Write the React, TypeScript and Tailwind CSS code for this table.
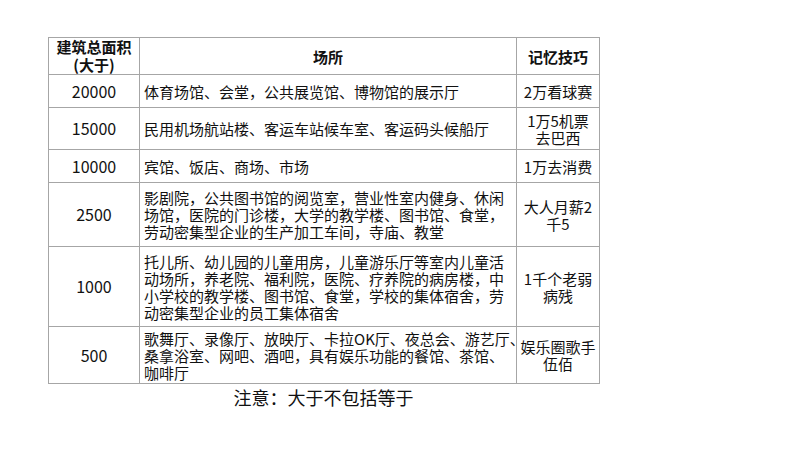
const FONT = { fontFamily: '"Noto Sans CJK SC", "Noto Sans", sans-serif' };

interface Row {
  area: string;
  places: string[];
  tip: string[];
  h: string;
}

const ROWS: Row[] = [
  { area: "20000", places: ["体育场馆、会堂，公共展览馆、博物馆的展示厅"], tip: ["2万看球赛"], h: "h-[33px]" },
  { area: "15000", places: ["民用机场航站楼、客运车站候车室、客运码头候船厅"], tip: ["1万5机票", "去巴西"], h: "h-[42px]" },
  { area: "10000", places: ["宾馆、饭店、商场、市场"], tip: ["1万去消费"], h: "h-[33px]" },
  {
    area: "2500",
    places: [
      "影剧院，公共图书馆的阅览室，营业性室内健身、休闲",
      "场馆，医院的门诊楼，大学的教学楼、图书馆、食堂，",
      "劳动密集型企业的生产加工车间，寺庙、教堂",
    ],
    tip: ["大人月薪2", "千5"],
    h: "h-[64px]",
  },
  {
    area: "1000",
    places: [
      "托儿所、幼儿园的儿童用房，儿童游乐厅等室内儿童活",
      "动场所，养老院、福利院，医院、疗养院的病房楼，中",
      "小学校的教学楼、图书馆、食堂，学校的集体宿舍，劳",
      "动密集型企业的员工集体宿舍",
    ],
    tip: ["1千个老弱", "病残"],
    h: "h-[80px]",
  },
  {
    area: "500",
    places: [
      "歌舞厅、录像厅、放映厅、卡拉OK厅、夜总会、游艺厅、",
      "桑拿浴室、网吧、酒吧，具有娱乐功能的餐馆、茶馆、",
      "咖啡厅",
    ],
    tip: ["娱乐圈歌手", "伍佰"],
    h: "h-[57px]",
  },
];

export default function App() {
  return (
    <div className="h-[450px] w-[800px] bg-white text-[#111]" style={FONT}>
      <div className="pl-[48px] pt-[37px]">
        <table className="w-[551px] table-fixed border-collapse text-[15px] leading-[17px]">
          <colgroup>
            <col className="w-[91px]" />
            <col className="w-[377px]" />
            <col className="w-[83px]" />
          </colgroup>
          <thead>
            <tr className="h-[37px]">
              <th className="border border-[#a6a6a6] px-1 text-center font-bold leading-[18px]">
                建筑总面积
                <br />
                (大于)
              </th>
              <th className="border border-[#a6a6a6] px-1 text-center font-bold">场所</th>
              <th className="border border-[#a6a6a6] px-1 text-center font-bold">记忆技巧</th>
            </tr>
          </thead>
          <tbody>
            {ROWS.map((r) => (
              <tr key={r.area} className={r.h}>
                <td className="border border-[#a6a6a6] text-center text-[16px]">{r.area}</td>
                <td className="whitespace-nowrap border border-[#a6a6a6] pl-[4px] text-left">
                  {r.places.map((p, i) => (
                    <div key={i}>{p}</div>
                  ))}
                </td>
                <td className="whitespace-nowrap border border-[#a6a6a6] text-center">
                  {r.tip.map((t, i) => (
                    <div key={i}>{t}</div>
                  ))}
                </td>
              </tr>
            ))}
          </tbody>
        </table>
        <div className="w-[551px] pt-[2px] text-center text-[18px] leading-[22px]">注意：大于不包括等于</div>
      </div>
    </div>
  );
}
